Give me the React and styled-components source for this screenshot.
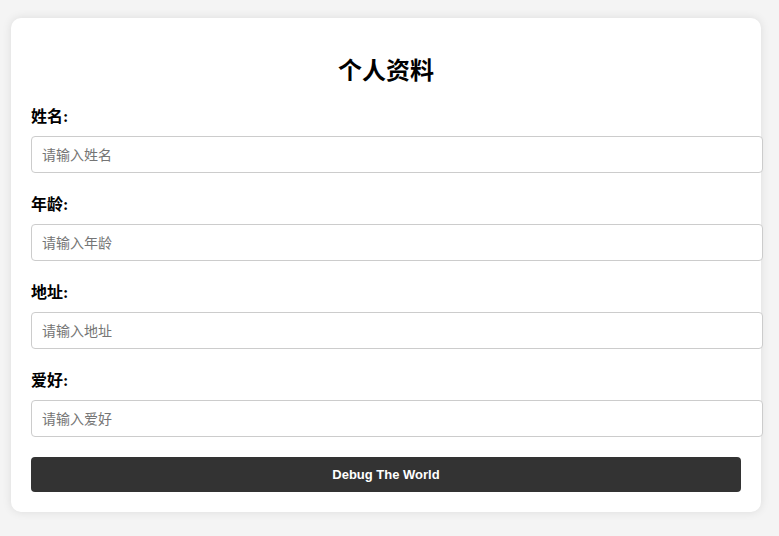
import styled, { createGlobalStyle } from "styled-components";

const GlobalStyle = createGlobalStyle`
  body {
    margin: 0;
    background: #f4f4f4;
    font-family: Arial, "Liberation Sans", "Noto Sans CJK SC", sans-serif;
  }
`;

const Page = styled.div`
  padding: 18px 18px 24px 11px;
`;

const Card = styled.div`
  width: 710px;
  padding: 20px;
  background: #fff;
  border-radius: 10px;
  box-shadow: 0 0 10px rgba(0, 0, 0, 0.1);
`;

const Title = styled.h2`
  margin: 19px 0 20px;
  text-align: center;
  font-size: 24px;
  line-height: 28px;
  font-weight: bold;
  color: #000;
  font-family: "Liberation Sans", "Noto Sans CJK SC", sans-serif;
`;

const Field = styled.div`
  display: flex;
  flex-direction: column;
  gap: 7px;
  margin-bottom: 20px;
`;

const Label = styled.label`
  font-size: 16px;
  line-height: 24px;
  font-weight: bold;
  color: #000;
  font-family: "Liberation Serif", "Noto Sans CJK SC", serif;
`;

const Input = styled.input`
  box-sizing: content-box;
  width: 100%;
  height: 17px;
  padding: 9px 10px;
  border: 1px solid #ccc;
  border-radius: 4px;
  font-size: 14px;
  font-family: "Liberation Sans", "Noto Sans CJK SC", sans-serif;
  outline: none;
  &::placeholder {
    color: #757575;
  }
`;

const Button = styled.button`
  display: block;
  width: 100%;
  height: 35px;
  border: none;
  border-radius: 4px;
  background: #333;
  color: #fff;
  font-size: 13px;
  font-weight: bold;
  font-family: "Liberation Sans", Arial, sans-serif;
  cursor: pointer;
`;

const fields = [
  { label: "姓名:", placeholder: "请输入姓名" },
  { label: "年龄:", placeholder: "请输入年龄" },
  { label: "地址:", placeholder: "请输入地址" },
  { label: "爱好:", placeholder: "请输入爱好" },
];

export default function App() {
  return (
    <>
      <GlobalStyle />
      <Page>
        <Card>
          <Title>个人资料</Title>
          {fields.map((f) => (
            <Field key={f.label}>
              <Label>{f.label}</Label>
              <Input placeholder={f.placeholder} />
            </Field>
          ))}
          <Button>Debug The World</Button>
        </Card>
      </Page>
    </>
  );
}
